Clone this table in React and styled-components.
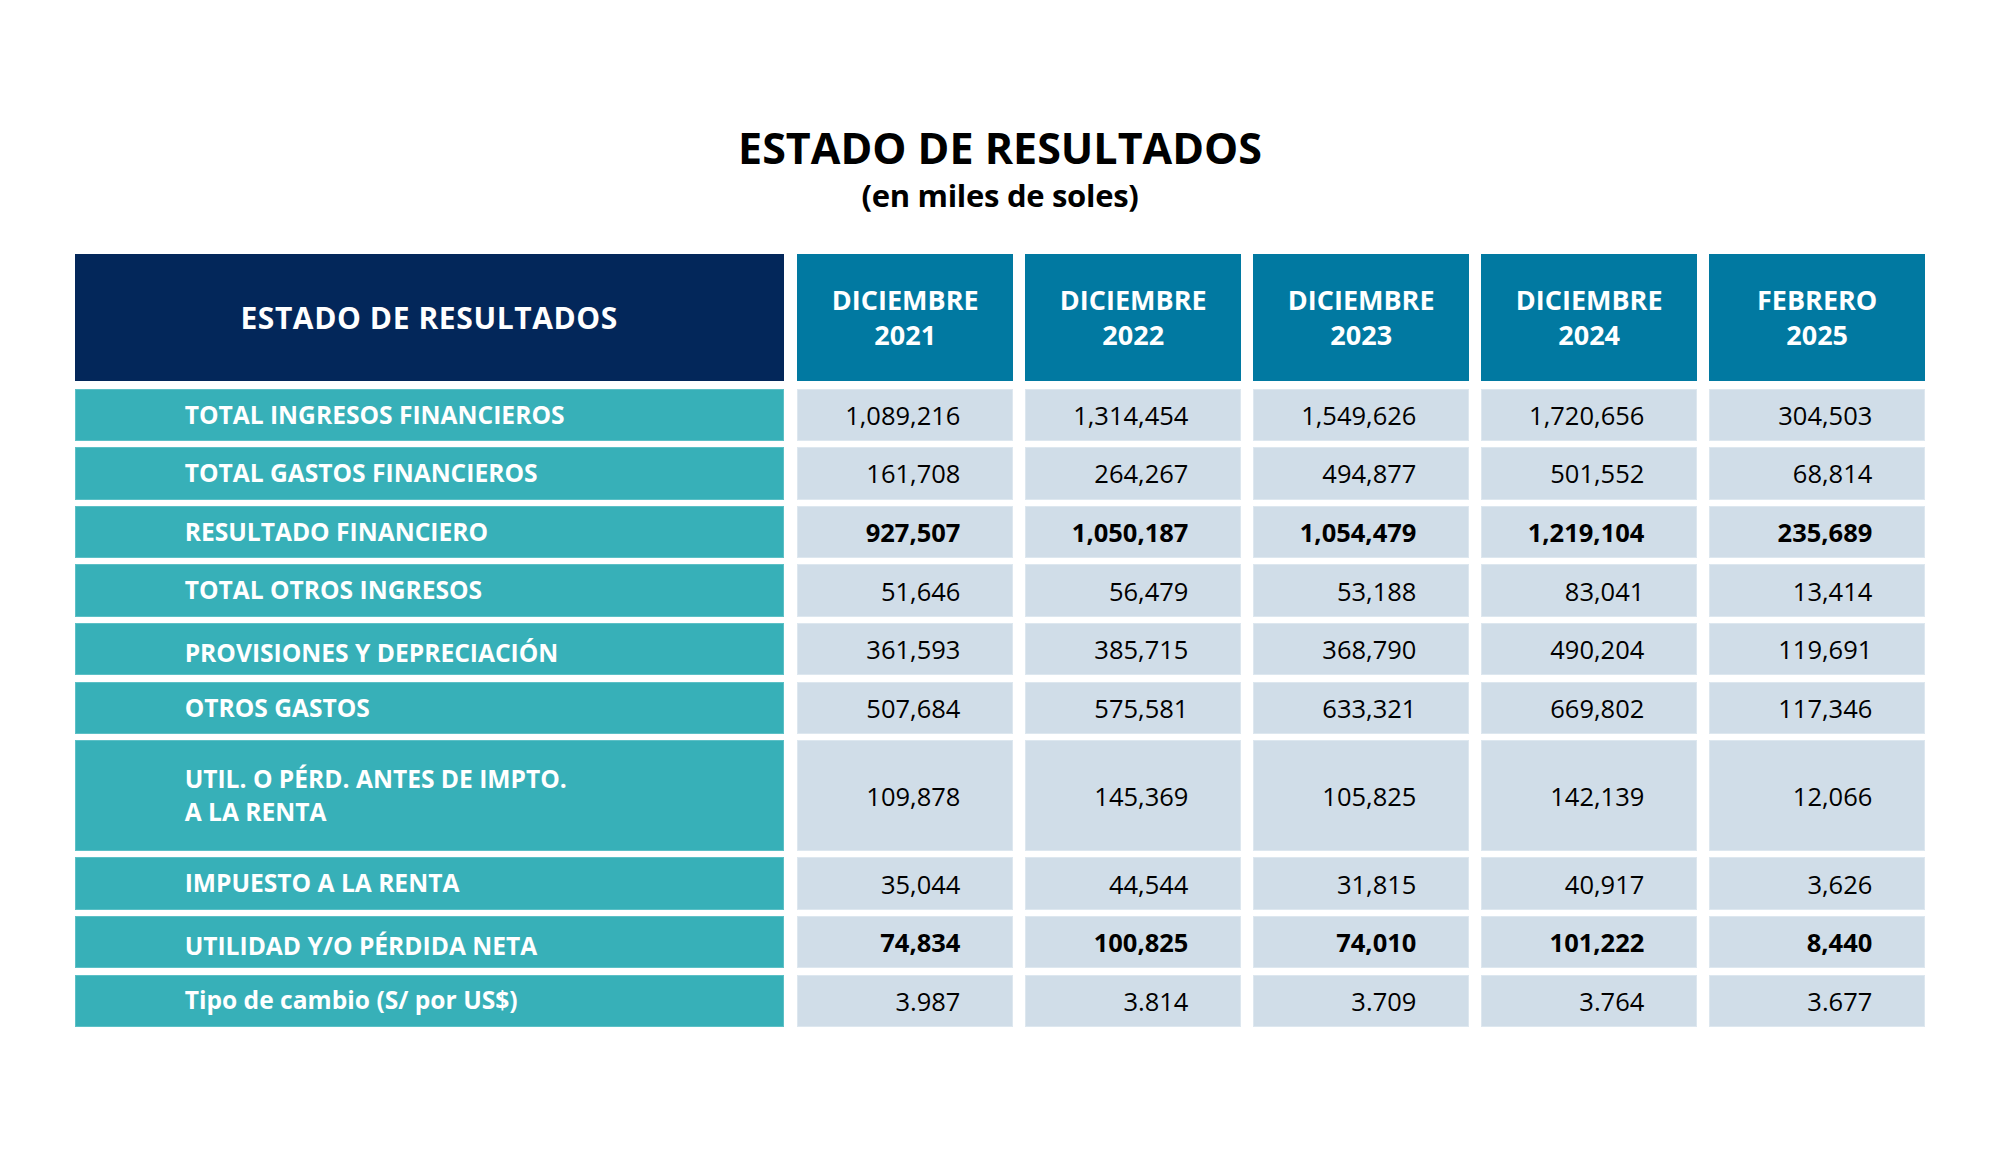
import React from "react";
import styled, { createGlobalStyle } from "styled-components";

const Global = createGlobalStyle`
  html, body { margin: 0; padding: 0; background: #ffffff; }
  body { font-family: "Open Sans", "Noto Sans", sans-serif; }
`;

const Page = styled.div`
  width: 2000px;
  min-height: 1153px;
  box-sizing: border-box;
  padding-top: 122px;
  display: flex;
  flex-direction: column;
  align-items: center;
`;

const Title = styled.h1`
  margin: 0;
  font-family: "Open Sans", sans-serif;
  font-weight: 700;
  font-size: 43px;
  line-height: 52px;
  color: #000;
  letter-spacing: 0px;
`;

const Subtitle = styled.h2`
  margin: 1.5px 0 0;
  font-family: "Open Sans", sans-serif;
  font-weight: 700;
  font-size: 31px;
  line-height: 38px;
  color: #000;
  letter-spacing: -0.3px;
`;

const Table = styled.div`
  margin-top: 40px;
  display: grid;
  grid-template-columns: 710.8px repeat(5, 216.4px);
  grid-template-rows: 129px repeat(6, 52.4px) 111px repeat(3, 52.4px);
  column-gap: 11.6px;
  row-gap: 6.2px;
`;

const Corner = styled.div`
  width: 709px;
  height: 127.7px;
  align-self: start;
  background: #03275a;
  color: #fff;
  display: flex;
  align-items: center;
  justify-content: center;
  font-weight: 700;
  font-size: 30px;
  letter-spacing: 0.6px;
`;

const HeadCell = styled.div`
  height: 127.7px;
  align-self: start;
  background: #0179a1;
  color: #fff;
  display: flex;
  align-items: center;
  justify-content: center;
  text-align: center;
  font-weight: 700;
  font-size: 27px;
  line-height: 35.5px;
`;

const LabelCell = styled.div`
  width: 709px;
  box-sizing: border-box;
  background: #37b0b8;
  color: #fff;
  display: flex;
  align-items: center;
  padding-left: 110px;
  padding-top: ${(p) => (p.$drop ? "8px" : "0")};
  font-weight: 700;
  font-size: 24.6px;
  line-height: 32.5px;
  box-shadow: inset 0 0 0 1px #5cc0c6;
`;

const ValueCell = styled.div`
  background: #d0dde8;
  color: #000;
  display: flex;
  align-items: center;
  justify-content: flex-end;
  padding-right: 53px;
  font-weight: ${(p) => (p.$bold ? 700 : 400)};
  font-size: 25.5px;
  box-shadow: inset 0 0 0 1px #dde7ef;
`;

const columns = [
  ["DICIEMBRE", "2021"],
  ["DICIEMBRE", "2022"],
  ["DICIEMBRE", "2023"],
  ["DICIEMBRE", "2024"],
  ["FEBRERO", "2025"],
];

const rows = [
  { label: ["TOTAL INGRESOS FINANCIEROS"], values: ["1,089,216", "1,314,454", "1,549,626", "1,720,656", "304,503"] },
  { label: ["TOTAL GASTOS FINANCIEROS"], values: ["161,708", "264,267", "494,877", "501,552", "68,814"] },
  { label: ["RESULTADO FINANCIERO"], bold: true, values: ["927,507", "1,050,187", "1,054,479", "1,219,104", "235,689"] },
  { label: ["TOTAL OTROS INGRESOS"], values: ["51,646", "56,479", "53,188", "83,041", "13,414"] },
  { label: ["PROVISIONES Y DEPRECIACIÓN"], drop: true, values: ["361,593", "385,715", "368,790", "490,204", "119,691"] },
  { label: ["OTROS GASTOS"], values: ["507,684", "575,581", "633,321", "669,802", "117,346"] },
  { label: ["UTIL. O PÉRD. ANTES DE IMPTO.", "A LA RENTA"], values: ["109,878", "145,369", "105,825", "142,139", "12,066"] },
  { label: ["IMPUESTO A LA RENTA"], values: ["35,044", "44,544", "31,815", "40,917", "3,626"] },
  { label: ["UTILIDAD Y/O PÉRDIDA NETA"], bold: true, drop: true, values: ["74,834", "100,825", "74,010", "101,222", "8,440"] },
  { label: ["Tipo de cambio (S/ por US$)"], values: ["3.987", "3.814", "3.709", "3.764", "3.677"] },
];

export default function App() {
  return (
    <Page>
      <Global />
      <Title>ESTADO DE RESULTADOS</Title>
      <Subtitle>(en miles de soles)</Subtitle>
      <Table>
        <Corner>ESTADO DE RESULTADOS</Corner>
        {columns.map((c, i) => (
          <HeadCell key={i}>
            {c[0]}
            <br />
            {c[1]}
          </HeadCell>
        ))}
        {rows.map((r, ri) => (
          <React.Fragment key={ri}>
            <LabelCell $drop={r.drop}>
              <div>
                {r.label.map((l, li) => (
                  <div key={li}>{l}</div>
                ))}
              </div>
            </LabelCell>
            {r.values.map((v, vi) => (
              <ValueCell key={vi} $bold={r.bold}>
                {v}
              </ValueCell>
            ))}
          </React.Fragment>
        ))}
      </Table>
    </Page>
  );
}
